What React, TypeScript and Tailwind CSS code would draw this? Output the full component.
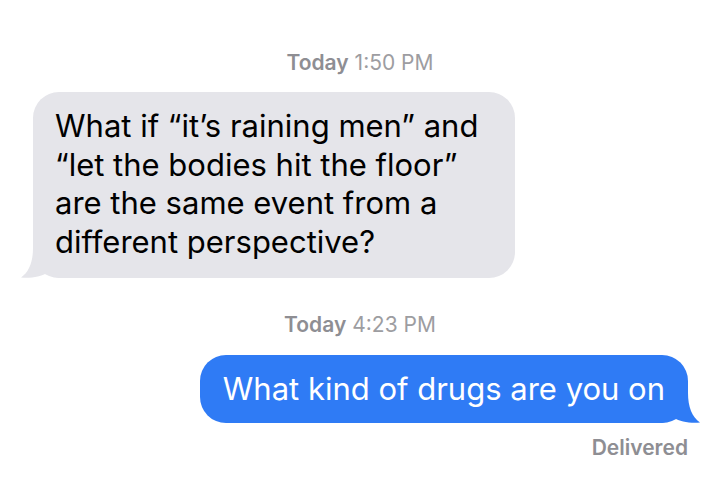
import React from 'react'

const font = { fontFamily: 'Inter, "Liberation Sans", Arial, sans-serif' }

function Tail({ color, flip }: { color: string; flip?: boolean }) {
  return (
    <svg
      width="50"
      height="30"
      viewBox="0 0 50 30"
      className={
        flip
          ? 'absolute -right-[12px] bottom-0 -scale-x-100'
          : 'absolute -left-[12px] bottom-0'
      }
    >
      <path
        d="M12 0 C12 14 8 24 0 29.5 C10 30.5 20 28.5 26 25 C30 28 36 30 44 30 L50 30 L50 0 Z"
        fill={color}
      />
    </svg>
  )
}

function Stamp({ day, time }: { day: string; time: string }) {
  return (
    <div className="text-center text-[21px] leading-[24px] text-[#8e8e93]">
      <span className="font-semibold">{day}</span> <span className="text-[#9d9da1]">{time}</span>
    </div>
  )
}

export default function App() {
  return (
    <div className="w-[720px] h-[497px] bg-white flex flex-col overflow-hidden" style={font}>
      <div className="pt-[51px]">
        <Stamp day="Today" time="1:50 PM" />
      </div>

      <div className="relative mt-[17px] ml-[33px] w-[482px] rounded-[26px] bg-[#e5e5ea] pl-[22px] pt-[15px] pb-[17px] text-[31px] leading-[38.5px] text-black">
        <Tail color="#e5e5ea" />
        <p className="relative">
          What if “it’s raining men” and
          <br />
          “let the bodies hit the floor”
          <br />
          are the same event from a
          <br />
          different perspective?
        </p>
      </div>

      <div className="mt-[35px]">
        <Stamp day="Today" time="4:23 PM" />
      </div>

      <div className="relative self-end mt-[18px] mr-[32px] rounded-[26px] bg-[#2f7bf5] px-[23px] pt-[15px] pb-[14px] text-[31px] leading-[38.5px] text-white">
        <Tail color="#2f7bf5" flip />
        <p className="relative">What kind of drugs are you on</p>
      </div>

      <div className="self-end mt-[13px] mr-[32px] text-[21px] leading-[24px] font-semibold text-[#8e8e93]">
        Delivered
      </div>
    </div>
  )
}
